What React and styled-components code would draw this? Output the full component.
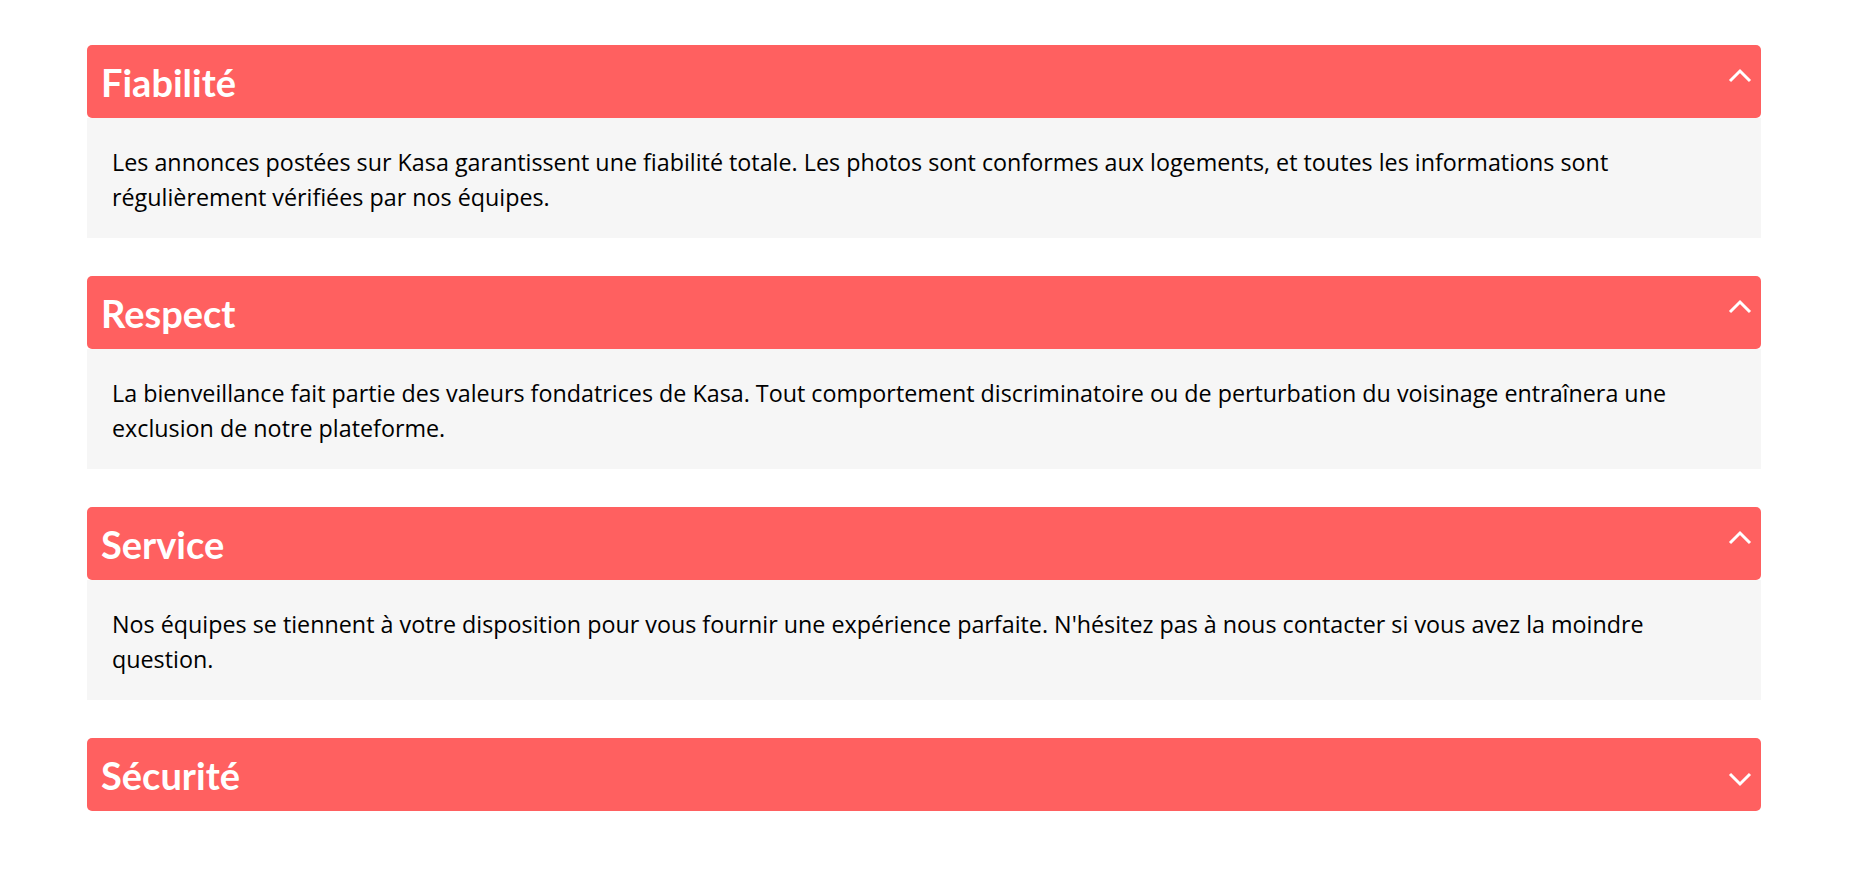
import React from 'react';
import styled, { createGlobalStyle } from 'styled-components';

const GlobalStyle = createGlobalStyle`
  body {
    margin: 0;
    background: #ffffff;
    font-family: Lato, "Open Sans", sans-serif;
  }
`;

const StyledMain = styled.main`
  display: flex;
  flex-direction: column;
  gap: 38px;
  padding: 45px 88px 40px 87px;
`;

const Collapse = styled.section`
  display: flex;
  flex-direction: column;
`;

const CollapseHeader = styled.button`
  display: flex;
  align-items: center;
  justify-content: space-between;
  height: 73px;
  padding: 0 9px 0 14px;
  border: none;
  border-radius: 5px;
  background-color: #ff6060;
  color: #ffffff;
  cursor: pointer;
  font-family: inherit;
  h2 {
    margin: 0;
    font-size: 38px;
    font-weight: 700;
  }
`;

const Chevron = styled.svg`
  width: 24px;
  height: 16px;
  align-self: ${(props) => (props.open ? 'flex-start' : 'flex-end')};
  margin: ${(props) => (props.open ? '22px 0 0 0' : '0 0 23px 0')};
`;

const CollapseBody = styled.div`
  background-color: #f6f6f6;
  padding: 27px 25px 23px 25px;
  p {
    margin: 0;
    font-family: "Open Sans", sans-serif;
    font-size: 23.3px;
    line-height: 35px;
    color: #000000;
  }
`;

const items = [
  {
    id: 1,
    title: 'Fiabilité',
    text: 'Les annonces postées sur Kasa garantissent une fiabilité totale. Les photos sont conformes aux logements, et toutes les informations sont régulièrement vérifiées par nos équipes.',
    open: true,
  },
  {
    id: 2,
    title: 'Respect',
    text: 'La bienveillance fait partie des valeurs fondatrices de Kasa. Tout comportement discriminatoire ou de perturbation du voisinage entraînera une exclusion de notre plateforme.',
    open: true,
  },
  {
    id: 3,
    title: 'Service',
    text: "Nos équipes se tiennent à votre disposition pour vous fournir une expérience parfaite. N'hésitez pas à nous contacter si vous avez la moindre question.",
    open: true,
  },
  {
    id: 4,
    title: 'Sécurité',
    text: "La sécurité est la priorité de Kasa. Aussi bien pour nos hôtes que pour les voyageurs, chaque logement correspond aux critères de sécurité établis par nos services.",
    open: false,
  },
];

const CollapseItem = ({ item }) => {
  const [open, setOpen] = React.useState(item.open);

  return (
    <Collapse>
      <CollapseHeader onClick={() => setOpen(!open)}>
        <h2>{item.title}</h2>
        <Chevron open={open} viewBox="0 0 24 16">
          {open ? (
            <polyline points="2,14 12,4 22,14" fill="none" stroke="#ffffff" strokeWidth="3" />
          ) : (
            <polyline points="2,2 12,12 22,2" fill="none" stroke="#ffffff" strokeWidth="3" />
          )}
        </Chevron>
      </CollapseHeader>
      {open && (
        <CollapseBody>
          <p>{item.text}</p>
        </CollapseBody>
      )}
    </Collapse>
  );
};

const App = () => (
  <>
    <GlobalStyle />
    <StyledMain>
      {items.map((item) => (
        <CollapseItem key={item.id} item={item} />
      ))}
    </StyledMain>
  </>
);

export default App;
